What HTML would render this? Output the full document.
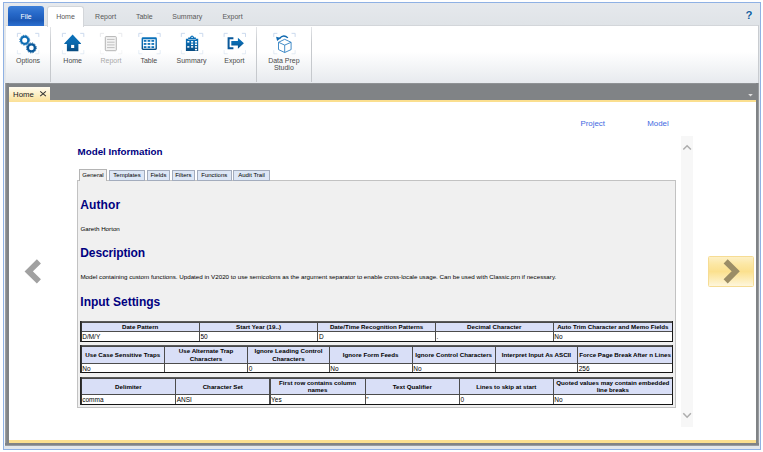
<!DOCTYPE html>
<html>
<head>
<meta charset="utf-8">
<title>Model Information</title>
<style>
html,body{margin:0;padding:0;}
body{width:763px;height:452px;background:#fff;position:relative;overflow:hidden;font-family:"Liberation Sans",sans-serif;}
.abs{position:absolute;}
#win{left:3px;top:2px;width:758px;height:447.5px;border:1px solid #8fb1e4;background:#e3e7eb;box-sizing:border-box;}
#tabbar{left:4px;top:3px;width:756px;height:23px;background:linear-gradient(#e6e9ed,#dfe3e7);}
#file{left:8px;top:6px;width:36px;height:20px;border-radius:3px 3px 0 0;background:linear-gradient(#3d7fd8,#2668c8 40%,#1c59b6 72%,#2b6fd0);color:#fff;font-size:6.8px;line-height:22.6px;text-align:center;}
#hometab{left:47.2px;top:6px;width:36.6px;height:21px;border-radius:3px 3px 0 0;background:#fff;border:1px solid #d3d6da;border-bottom:none;box-sizing:border-box;}
.rt{top:6px;height:20px;line-height:22px;font-size:7px;color:#585858;text-align:center;}
#ribbon{left:6px;top:25px;width:753px;height:58px;border-right:1px solid #c9ccd0;background:linear-gradient(#ffffff 0%,#ffffff 45%,#e7eaee 100%);border-top:1px solid #d3d6da;box-sizing:border-box;}
.sep{top:27px;width:1px;height:55px;background:linear-gradient(#e3e5e8,#c6c9cd 30%,#c6c9cd);}
.lbl{font-size:7px;color:#4a4a4a;text-align:center;line-height:9px;}
#band{left:5.3px;top:83px;width:754.1px;height:17px;background:linear-gradient(#96999c,#808386 1.5px);}
#yl{left:9px;top:99.6px;width:746.6px;height:2.6px;background:#fbdf8f;}
#content{left:9px;top:102px;width:746.6px;height:338.4px;background:#fff;}
#lb{left:5.3px;top:83px;width:3.7px;height:363px;background:linear-gradient(to right,#a4a7ab,#808386 45%);}
#rb{left:755.6px;top:83px;width:3.8px;height:363px;background:linear-gradient(to left,#a4a7ab,#808386 45%);}
#yb{left:9px;top:440.2px;width:746.6px;height:3px;background:#fbdf8f;}
#bb{left:5.3px;top:443px;width:754.1px;height:3.3px;background:linear-gradient(#808386 50%,#a4a7ab);}
#doctab{left:9px;top:86.8px;width:41.4px;height:15.4px;background:linear-gradient(#fffbef,#fdf0c8 45%,#fbe096);font-size:7.8px;line-height:15px;color:#222;}
#panel{left:77px;top:180px;width:599.3px;height:228.4px;background:#f0f0f0;border:1px solid #c2c2c2;box-sizing:border-box;}
h1,h2{margin:0;}
.ttl{left:77.5px;top:145.7px;font-size:9.8px;line-height:12px;font-weight:bold;color:#000080;white-space:nowrap;}
.h2{font-size:12px;line-height:14px;font-weight:bold;color:#000080;left:80.3px;white-space:nowrap;}
.p{font-size:6.22px;line-height:8px;color:#000;left:80.4px;white-space:nowrap;}
.tab{top:169.5px;height:11.3px;border:1px solid #a3acbd;background:#dde7f6;font-size:6px;line-height:9.5px;text-align:center;box-sizing:border-box;color:#000;white-space:nowrap;}
.tab.act{top:168.8px;height:12.6px;background:#f0f0f0;border-color:#b4b4b4;border-bottom:none;line-height:10.5px;}
.tb{background:linear-gradient(#626262,#474747 1.6px,#4c4c4c 2px,#4c4c4c calc(100% - 1.5px),#141414 calc(100% - 1.2px));box-shadow:inset 1.6px 0 0 #262626,inset -0.9px 0 0 #141414;}
.th{background:#d9dff7;font-size:6.2px;font-weight:bold;color:#000;text-align:center;white-space:nowrap;overflow:hidden;}
.td{background:#fff;font-size:6.5px;color:#000;text-align:left;white-space:nowrap;overflow:hidden;text-indent:0.6px;}
.lnk{top:119.2px;font-size:7.9px;line-height:10px;color:#4169e1;white-space:nowrap;}
#sb{left:681.2px;top:136px;width:11.6px;height:290.8px;background:#f7f7f7;}
#next{left:707.8px;top:255.8px;width:46.1px;height:31px;background:linear-gradient(#fdf0c6 0%,#fce7a4 25%,#fbe08e 50%,#fdeebc 80%,#fef6dc 100%);border:1px solid #f6dc94;border-radius:1.5px;box-sizing:border-box;}
</style>
</head>
<body>
<div id="win" class="abs"></div>
<div id="tabbar" class="abs"></div>
<div id="ribbon" class="abs"></div>
<div id="file" class="abs">File</div>
<div id="hometab" class="abs"></div>
<div class="abs rt" style="left:48px;width:35px;">Home</div>
<div class="abs rt" style="left:88.6px;width:34px;">Report</div>
<div class="abs rt" style="left:127.3px;width:34px;">Table</div>
<div class="abs rt" style="left:166.3px;width:42px;">Summary</div>
<div class="abs rt" style="left:214.5px;width:36px;">Export</div>
<div class="abs" style="left:743.9px;top:8.6px;width:10px;font-size:11.4px;line-height:13px;font-weight:bold;color:#14609f;text-align:center;text-shadow:0 0 2px #fff;">?</div>

<div class="abs sep" style="left:50px;"></div>
<div class="abs sep" style="left:255.9px;"></div>
<div class="abs sep" style="left:311.2px;"></div>

<svg class="abs" style="left:0;top:26px;" width="340" height="58" viewBox="0 26 340 58">
<defs>
<linearGradient id="bl" x1="0" y1="0" x2="0" y2="1"><stop offset="0" stop-color="#0b72bb"/><stop offset="0.5" stop-color="#0a69ae"/><stop offset="1" stop-color="#084b80"/></linearGradient>
</defs>
<path d="M17.40 36.95V33.35H21.00M35.20 33.35H38.80V36.95" fill="none" stroke="#c6d6ec" stroke-width="0.9"/><path d="M38.80 50.15V53.75H35.20M21.00 53.75H17.40V50.15" fill="none" stroke="#c6d6ec" stroke-width="0.9" opacity="0.5"/><path d="M62.40 36.95V33.35H66.00M80.20 33.35H83.80V36.95" fill="none" stroke="#c6d6ec" stroke-width="0.9"/><path d="M83.80 50.15V53.75H80.20M66.00 53.75H62.40V50.15" fill="none" stroke="#c6d6ec" stroke-width="0.9" opacity="0.5"/><path d="M100.40 36.95V33.35H104.00M118.20 33.35H121.80V36.95" fill="none" stroke="#e6e8eb" stroke-width="0.9"/><path d="M121.80 50.15V53.75H118.20M104.00 53.75H100.40V50.15" fill="none" stroke="#e6e8eb" stroke-width="0.9" opacity="0.5"/><path d="M138.80 36.95V33.35H142.40M156.60 33.35H160.20V36.95" fill="none" stroke="#c6d6ec" stroke-width="0.9"/><path d="M160.20 50.15V53.75H156.60M142.40 53.75H138.80V50.15" fill="none" stroke="#c6d6ec" stroke-width="0.9" opacity="0.5"/><path d="M181.35 36.95V33.35H184.95M199.15 33.35H202.75V36.95" fill="none" stroke="#c6d6ec" stroke-width="0.9"/><path d="M202.75 50.15V53.75H199.15M184.95 53.75H181.35V50.15" fill="none" stroke="#c6d6ec" stroke-width="0.9" opacity="0.5"/><path d="M224.10 36.95V33.35H227.70M241.90 33.35H245.50V36.95" fill="none" stroke="#c6d6ec" stroke-width="0.9"/><path d="M245.50 50.15V53.75H241.90M227.70 53.75H224.10V50.15" fill="none" stroke="#c6d6ec" stroke-width="0.9" opacity="0.5"/><path d="M273.75 36.95V33.35H277.35M291.55 33.35H295.15V36.95" fill="none" stroke="#c6d6ec" stroke-width="0.9"/><path d="M295.15 50.15V53.75H291.55M277.35 53.75H273.75V50.15" fill="none" stroke="#c6d6ec" stroke-width="0.9" opacity="0.5"/>
<!-- options gears -->
<g fill="none">
<circle cx="24.7" cy="40.2" r="3.6" stroke-width="2.2" stroke="#0c6cb3"/>
<circle cx="24.7" cy="40.2" r="4.95" stroke-width="1" stroke-dasharray="1.3 1.292" stroke="#0c6cb3"/>
<circle cx="31.4" cy="47.9" r="3.5" stroke-width="2.3" stroke="#09589a"/>
<circle cx="31.4" cy="47.9" r="4.95" stroke-width="1" stroke-dasharray="1.3 1.292" stroke="#09589a"/>
</g>
<!-- home -->
<path d="M72.6 34.5 L81.1 43.4 Q81.1 44 80.4 44 H78.4 V51.2 H66.9 V44 H64.8 Q64.1 44 64.2 43.4 Z" fill="url(#bl)"/>
<rect x="71.1" y="44.9" width="3.1" height="3.1" fill="#fff"/>
<!-- report (disabled) -->
<rect x="105.3" y="36.6" width="11" height="14.1" rx="0.8" fill="#f3f3f3" stroke="#b4b4b4" stroke-width="1"/>
<path d="M107 39.4H114.6M107 42.2H114.6M107 44.9H114.6M107 47.6H114.6" stroke="#b9b9b9" stroke-width="0.9"/>
<!-- table -->
<rect x="141.6" y="37.3" width="15.3" height="12.7" rx="1.4" fill="url(#bl)"/>
<rect x="143" y="39.3" width="12.5" height="9.3" fill="#fff"/>
<g fill="#1273b8"><rect x="143.75" y="40.00" width="2.7" height="1.8"/><rect x="147.60" y="40.00" width="2.7" height="1.8"/><rect x="151.45" y="40.00" width="2.7" height="1.8"/><rect x="143.75" y="43.05" width="2.7" height="1.8"/><rect x="147.60" y="43.05" width="2.7" height="1.8"/><rect x="151.45" y="43.05" width="2.7" height="1.8"/><rect x="143.75" y="46.20" width="2.7" height="1.8"/><rect x="147.60" y="46.20" width="2.7" height="1.8"/><rect x="151.45" y="46.20" width="2.7" height="1.8"/></g>
<!-- summary -->
<path d="M185.9 38.7 H188.2 V37.6 H189.8 Q192.05 33.6 194.3 37.6 H195.9 V38.7 H198.2 V50.9 H185.9 Z" fill="url(#bl)"/>
<path d="M188.3 39.5 H195.8" stroke="#fff" stroke-width="0.6" opacity="0.9"/>
<circle cx="192.1" cy="37.4" r="0.7" fill="#fff"/>
<g fill="#fff"><rect x="187.25" y="41.05" width="2.1" height="1.5"/><rect x="191.05" y="41.05" width="2.1" height="1.5"/><rect x="194.95" y="41.05" width="2.1" height="1.5"/><rect x="191.05" y="43.55" width="2.1" height="1.5"/><rect x="194.95" y="43.55" width="2.1" height="1.5"/><rect x="187.25" y="46.15" width="2.1" height="1.5"/><rect x="191.05" y="46.15" width="2.1" height="1.5"/><rect x="194.95" y="46.15" width="2.1" height="1.5"/><rect x="194.95" y="48.85" width="2.1" height="1.5"/></g>
<!-- export -->
<path d="M233.4 38.3 H228.6 V48.2 H233.4" fill="none" stroke="#09589a" stroke-width="2"/>
<path d="M231.3 40.9 H237.9 V37.8 L243.9 43.3 L237.9 48.8 V45.6 H231.3 Z" fill="url(#bl)"/>
<!-- data prep studio -->
<g fill="none" stroke="#2f80c2" stroke-width="0.9" stroke-linejoin="round">
<path d="M284.7 39.3 L291.1 42.3 V49.6 L284.7 52.5 L278.5 49.6 V42.3 Z"/>
<path d="M278.5 42.3 L284.7 45.1 L291.1 42.3 M284.7 45.1 V52.5"/>
<path d="M279.6 38.3 Q283.7 33.9 287.9 37.9" stroke="#0f69b0" stroke-width="1.3"/>
</g>
<path d="M276.1 36.7 L281 38.1 L277.1 41.1 Z" fill="#0f69b0"/>
</svg>
<div class="abs lbl" style="left:8px;top:56px;width:40px;">Options</div>
<div class="abs lbl" style="left:52.7px;top:56px;width:40px;">Home</div>
<div class="abs lbl" style="left:91px;top:56px;width:40px;color:#a9a9a9;">Report</div>
<div class="abs lbl" style="left:128.8px;top:56px;width:40px;">Table</div>
<div class="abs lbl" style="left:171.5px;top:56px;width:40px;">Summary</div>
<div class="abs lbl" style="left:214.4px;top:56px;width:40px;">Export</div>
<div class="abs lbl" style="left:263.9px;top:56.9px;width:40px;line-height:7.5px;">Data Prep<br>Studio</div>

<div id="band" class="abs"></div>
<div class="abs" style="left:4px;top:83px;width:1.4px;height:363px;background:#f4f6f9;"></div>
<div id="lb" class="abs"></div>
<div id="rb" class="abs"></div>
<div id="yl" class="abs"></div>
<div id="content" class="abs"></div>
<div id="yb" class="abs"></div>
<div id="bb" class="abs"></div>
<div id="doctab" class="abs"><span class="abs" style="left:4px;top:0;">Home</span><svg class="abs" style="left:30px;top:3px;" width="9" height="8" viewBox="0 0 9 8"><path d="M1.2 1.4L6.9 6.1M6.9 1.4L1.2 6.1" stroke="#333" stroke-width="1.05" fill="none"/></svg></div>

<div class="abs lnk" style="left:580.4px;">Project</div>
<div class="abs lnk" style="left:647.2px;">Model</div>
<div id="sb" class="abs"></div>
<div id="next" class="abs"></div>
<svg class="abs" style="left:0;top:83px;" width="763" height="369" viewBox="0 83 763 369">
<path d="M748.2 93.9H752.8L750.5 96.5Z" fill="#dedede"/>
<path d="M683.3 149.6L687.1 145.7L690.9 149.6" fill="none" stroke="#adadad" stroke-width="1.5"/>
<path d="M683.3 413.2L687.1 417.2L690.9 413.2" fill="none" stroke="#adadad" stroke-width="1.5"/>
<path d="M38.9 261.4L28.7 271.4L38.9 281.4" fill="none" stroke="#a1a1a1" stroke-width="5.8"/>
<path d="M725.65 261.4L735.7 271.3L725.65 281.4" fill="none" stroke="#9b8d66" stroke-width="5.8"/>
</svg>

<h1 class="abs ttl">Model Information</h1>
<div id="panel" class="abs"></div>
<div class="abs tab act" style="left:78.7px;width:28.5px;">General</div>
<div class="abs tab" style="left:108.8px;width:36.4px;">Templates</div>
<div class="abs tab" style="left:146.8px;width:23.2px;">Fields</div>
<div class="abs tab" style="left:171.7px;width:23.4px;">Filters</div>
<div class="abs tab" style="left:196.8px;width:35px;">Functions</div>
<div class="abs tab" style="left:233.4px;width:36.2px;">Audit Trail</div>

<h2 class="abs h2" style="top:198.1px;letter-spacing:0.1px;">Author</h2>
<div class="abs p" style="top:224.6px;">Gareth Horton</div>
<h2 class="abs h2" style="top:246.4px;letter-spacing:-0.12px;">Description</h2>
<div class="abs p" style="top:272.9px;">Model containing custom functions. Updated in V2020 to use semicolons as the argument separator to enable cross-locale usage. Can be used with Classic.prn if necessary.</div>
<h2 class="abs h2" style="top:294.7px;">Input Settings</h2>

<div class="abs tb" style="left:80.0px;top:321.0px;width:593.0px;height:21.0px;">
<div class="abs th" style="left:1.6px;top:1.6px;width:117.2px;height:8.0px;line-height:8.0px;">Date Pattern</div>
<div class="abs td" style="left:1.6px;top:10.7px;width:117.2px;height:9.1px;line-height:10.1px;">D/M/Y</div>
<div class="abs th" style="left:119.8px;top:1.6px;width:117.5px;height:8.0px;line-height:8.0px;">Start Year (19..)</div>
<div class="abs td" style="left:119.8px;top:10.7px;width:117.5px;height:9.1px;line-height:10.1px;">50</div>
<div class="abs th" style="left:238.3px;top:1.6px;width:116.6px;height:8.0px;line-height:8.0px;">Date/Time Recognition Patterns</div>
<div class="abs td" style="left:238.3px;top:10.7px;width:116.6px;height:9.1px;line-height:10.1px;">D</div>
<div class="abs th" style="left:355.9px;top:1.6px;width:116.7px;height:8.0px;line-height:8.0px;">Decimal Character</div>
<div class="abs td" style="left:355.9px;top:10.7px;width:116.7px;height:9.1px;line-height:10.1px;">.</div>
<div class="abs th" style="left:473.6px;top:1.6px;width:118.5px;height:8.0px;line-height:8.0px;">Auto Trim Character and Memo Fields</div>
<div class="abs td" style="left:473.6px;top:10.7px;width:118.5px;height:9.1px;line-height:10.1px;">No</div>
</div>
<div class="abs tb" style="left:80.0px;top:345.1px;width:593.0px;height:28.3px;">
<div class="abs th" style="left:1.6px;top:1.6px;width:82.3px;height:16.5px;line-height:16.5px;">Use Case Sensitive Traps</div>
<div class="abs td" style="left:1.6px;top:19.1px;width:82.3px;height:8.0px;line-height:9.0px;">No</div>
<div class="abs th" style="left:84.9px;top:1.6px;width:82.3px;height:16.5px;line-height:7.7px;padding-top:0.55px;box-sizing:border-box;">Use Alternate Trap<br>Characters</div>
<div class="abs td" style="left:84.9px;top:19.1px;width:82.3px;height:8.0px;line-height:9.0px;"></div>
<div class="abs th" style="left:168.2px;top:1.6px;width:80.5px;height:16.5px;line-height:7.7px;padding-top:0.55px;box-sizing:border-box;">Ignore Leading Control<br>Characters</div>
<div class="abs td" style="left:168.2px;top:19.1px;width:80.5px;height:8.0px;line-height:9.0px;">0</div>
<div class="abs th" style="left:249.7px;top:1.6px;width:82.0px;height:16.5px;line-height:16.5px;">Ignore Form Feeds</div>
<div class="abs td" style="left:249.7px;top:19.1px;width:82.0px;height:8.0px;line-height:9.0px;">No</div>
<div class="abs th" style="left:332.7px;top:1.6px;width:82.0px;height:16.5px;line-height:16.5px;">Ignore Control Characters</div>
<div class="abs td" style="left:332.7px;top:19.1px;width:82.0px;height:8.0px;line-height:9.0px;">No</div>
<div class="abs th" style="left:415.7px;top:1.6px;width:81.4px;height:16.5px;line-height:16.5px;">Interpret Input As ASCII</div>
<div class="abs td" style="left:415.7px;top:19.1px;width:81.4px;height:8.0px;line-height:9.0px;"></div>
<div class="abs th" style="left:498.1px;top:1.6px;width:94.0px;height:16.5px;line-height:16.5px;">Force Page Break After n Lines</div>
<div class="abs td" style="left:498.1px;top:19.1px;width:94.0px;height:8.0px;line-height:9.0px;">256</div>
</div>
<div class="abs tb" style="left:80.0px;top:377.1px;width:593.0px;height:28.2px;">
<div class="abs th" style="left:1.6px;top:1.6px;width:93.5px;height:15.4px;line-height:15.4px;">Delimiter</div>
<div class="abs td" style="left:1.6px;top:18.0px;width:93.5px;height:9.0px;line-height:10.0px;">comma</div>
<div class="abs th" style="left:96.1px;top:1.6px;width:93.4px;height:15.4px;line-height:15.4px;">Character Set</div>
<div class="abs td" style="left:96.1px;top:18.0px;width:93.4px;height:9.0px;line-height:10.0px;">ANSI</div>
<div class="abs th" style="left:190.5px;top:1.6px;width:94.2px;height:15.4px;line-height:7.7px;padding-top:-0.00px;box-sizing:border-box;">First row contains column<br>names</div>
<div class="abs td" style="left:190.5px;top:18.0px;width:94.2px;height:9.0px;line-height:10.0px;">Yes</div>
<div class="abs th" style="left:285.7px;top:1.6px;width:93.3px;height:15.4px;line-height:15.4px;">Text Qualifier</div>
<div class="abs td" style="left:285.7px;top:18.0px;width:93.3px;height:9.0px;line-height:10.0px;">&quot;</div>
<div class="abs th" style="left:380.0px;top:1.6px;width:92.6px;height:15.4px;line-height:15.4px;">Lines to skip at start</div>
<div class="abs td" style="left:380.0px;top:18.0px;width:92.6px;height:9.0px;line-height:10.0px;">0</div>
<div class="abs th" style="left:473.6px;top:1.6px;width:118.5px;height:15.4px;line-height:7.7px;padding-top:-0.00px;box-sizing:border-box;">Quoted values may contain embedded<br>line breaks</div>
<div class="abs td" style="left:473.6px;top:18.0px;width:118.5px;height:9.0px;line-height:10.0px;">No</div>
</div>

</body>
</html>
